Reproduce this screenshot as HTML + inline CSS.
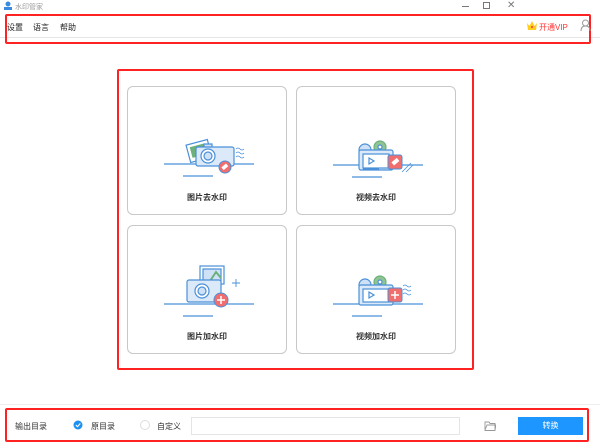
<!DOCTYPE html>
<html><head><meta charset="utf-8"><style>
*{margin:0;padding:0;box-sizing:border-box}
body{width:600px;height:444px;background:#fff;font-family:"Liberation Sans","Noto Sans CJK SC",sans-serif;position:relative;overflow:hidden;color:#333}
.abs{position:absolute}
.red{position:absolute;border:2px solid #f22;border-radius:2px}
.card{position:absolute;width:160px;height:129px;border:1px solid #c8c8c8;border-radius:6px;background:#fff}
.card .t{position:absolute;left:0;right:0;top:105px;text-align:center;font-size:8px;font-weight:bold;color:#333}
.card svg{position:absolute;left:0;top:0}
.m{font-size:8px;color:#222;top:22px}
</style></head><body>
<svg class="abs" style="left:3px;top:1px" width="10" height="10"><circle cx="5" cy="3" r="2.5" fill="#3a8be0"/><rect x="1" y="6" width="8" height="3" fill="#3a8be0"/></svg>
<div class="abs" style="left:15px;top:2px;font-size:7px;color:#999">水印管家</div>
<div class="abs" style="left:462px;top:6px;width:7px;height:1px;background:#777"></div>
<div class="abs" style="left:483px;top:2px;width:7px;height:7px;border:1px solid #777"></div>
<div class="abs" style="left:507px;top:0;font-size:10px;color:#777">✕</div>
<div class="abs" style="left:0;top:37px;width:600px;height:1px;background:#e6e6e6"></div>
<div class="red" style="left:5px;top:14px;width:586px;height:30px"></div>
<div class="abs m" style="left:7px">设置</div>
<div class="abs m" style="left:33px">语言</div>
<div class="abs m" style="left:60px">帮助</div>
<svg class="abs" style="left:526px;top:20px" width="12" height="11"><path d="M1 3 L3.5 6 L6 1 L8.5 6 L11 3 L10 10 L2 10Z" fill="#ffcc22"/><circle cx="6" cy="7" r="1" fill="#f33"/></svg>
<div class="abs m" style="left:539px;color:#f33">开通VIP</div>
<svg class="abs" style="left:580px;top:19px" width="11" height="12"><circle cx="5.5" cy="4" r="3" fill="none" stroke="#999"/><path d="M1 12 Q1 7 5.5 7 Q10 7 10 12" fill="none" stroke="#999"/></svg>

<div class="red" style="left:117px;top:69px;width:357px;height:301px"></div>

<div class="card" style="left:127px;top:86px">
<svg width="160" height="129"><g transform="translate(0,15)"><g fill="none" stroke="#4a90d9" stroke-width="1.2">
<line x1="36" y1="62" x2="126" y2="62"/><line x1="55" y1="74" x2="85" y2="74"/>
<rect x="60" y="40" width="22" height="18" fill="#fff" transform="rotate(-15 71 49)"/>
<rect x="63" y="43" width="15" height="11" fill="#6cb07c" stroke="none" transform="rotate(-15 71 49)"/>
<rect x="76" y="42" width="8" height="4" fill="#cfe1f7"/>
<rect x="68" y="45" width="38" height="19" rx="2" fill="#dbe9f9"/>
<circle cx="80" cy="54" r="7" fill="#fff"/><circle cx="80" cy="54" r="4" fill="#cfe1f7"/>
<path d="M108 47 q2 -2 4 0 q2 2 4 0 M108 51 q2 -2 4 0 q2 2 4 0 M108 55 q2 -2 4 0 q2 2 4 0" stroke-width="0.8"/>
</g><circle cx="97" cy="65" r="6" fill="#f06e6e" stroke="#4a90d9"/><rect x="94" y="63" width="6" height="3.5" fill="#fff" transform="rotate(-40 97 65)"/></g></svg>
<div class="t">图片去水印</div></div>

<div class="card" style="left:296px;top:86px">
<svg width="160" height="129"><g transform="translate(0,15)"><g fill="none" stroke="#4a90d9" stroke-width="1.2">
<line x1="36" y1="63" x2="126" y2="63"/><line x1="55" y1="75" x2="85" y2="75"/>
<circle cx="68" cy="48" r="6" fill="#cfe1f7"/><circle cx="83" cy="45" r="6" fill="#8fc592" stroke="#6cb07c"/><circle cx="83" cy="45" r="2" fill="#fff"/>
<rect x="62" y="48" width="34" height="20" rx="2" fill="#dbe9f9"/><rect x="66" y="52" width="26" height="14" fill="#fff"/>
<path d="M72 56 L77 59 L72 62Z"/><line x1="66" y1="67" x2="82" y2="67"/>
<path d="M105 70 L114 61 M109 70 L116 63" stroke-width="0.8"/>
</g><rect x="91" y="53" width="14" height="14" rx="2" fill="#f06e6e" stroke="#4a90d9"/><rect x="95" y="58" width="7" height="4" fill="#fff" transform="rotate(-40 98 60)"/></g></svg>
<div class="t">视频去水印</div></div>

<div class="card" style="left:127px;top:225px">
<svg width="160" height="129"><g fill="none" stroke="#4a90d9" stroke-width="1.2">
<line x1="36" y1="78" x2="126" y2="78"/><line x1="55" y1="90" x2="85" y2="90"/>
<rect x="72" y="40" width="24" height="18" fill="#fff"/><rect x="75" y="43" width="18" height="12" fill="#cfe1f7"/><path d="M82 55 L88 46 L93 52" stroke="#6cb07c" stroke-width="2"/>
<rect x="59" y="54" width="34" height="22" rx="2" fill="#dbe9f9"/>
<circle cx="74" cy="65" r="7" fill="#fff"/><circle cx="74" cy="65" r="4" fill="#cfe1f7"/>
<path d="M104 57 h8 M108 53 v8" stroke-width="0.9"/>
</g><circle cx="93" cy="74" r="7" fill="#f06e6e" stroke="#4a90d9"/><path d="M89 74 h8 M93 70 v8" stroke="#fff" stroke-width="1.5"/></svg>
<div class="t">图片加水印</div></div>

<div class="card" style="left:296px;top:225px">
<svg width="160" height="129"><g fill="none" stroke="#4a90d9" stroke-width="1.2">
<line x1="36" y1="78" x2="126" y2="78"/><line x1="55" y1="90" x2="85" y2="90"/>
<circle cx="68" cy="59" r="6" fill="#cfe1f7"/><circle cx="83" cy="56" r="6" fill="#8fc592" stroke="#6cb07c"/><circle cx="83" cy="56" r="2" fill="#fff"/>
<rect x="62" y="59" width="34" height="20" rx="2" fill="#dbe9f9"/><rect x="66" y="63" width="26" height="13" fill="#fff"/>
<path d="M72 66 L77 69 L72 72Z"/>
<path d="M106 60 q2 -2 4 0 q2 2 4 0 M106 64 q2 -2 4 0 q2 2 4 0 M106 68 q2 -2 4 0 q2 2 4 0" stroke-width="0.8"/>
</g><rect x="91" y="62" width="14" height="14" rx="2" fill="#f06e6e" stroke="#4a90d9"/><path d="M94 69 h8 M98 65 v8" stroke="#fff" stroke-width="1.5"/></svg>
<div class="t">视频加水印</div></div>

<div class="abs" style="left:0;top:404px;width:600px;height:1px;background:#eee"></div>
<div class="red" style="left:5px;top:408px;width:584px;height:34px"></div>
<div class="abs" style="left:15px;top:421px;font-size:8px">输出目录</div>
<svg class="abs" style="left:73px;top:420px" width="10" height="10"><circle cx="5" cy="5" r="4.5" fill="#1e90f0"/><path d="M2.8 5 L4.5 6.7 L7.3 3.5" stroke="#fff" fill="none" stroke-width="1.1"/></svg>
<div class="abs" style="left:91px;top:421px;font-size:8px">原目录</div>
<div class="abs" style="left:140px;top:420px;width:10px;height:10px;border:1px solid #ddd;border-radius:50%"></div>
<div class="abs" style="left:157px;top:421px;font-size:8px">自定义</div>
<div class="abs" style="left:191px;top:417px;width:269px;height:18px;border:1px solid #e5e5e5"></div>
<svg class="abs" style="left:484px;top:420px" width="12" height="11"><path d="M1 2 h4 l1 1.5 h5 v7 h-10z M1 10 l2 -5 h9 l-1 5" fill="none" stroke="#999" stroke-width="0.9"/></svg>
<div class="abs" style="left:518px;top:417px;width:65px;height:18px;background:#1e96ff;color:#fff;font-size:8px;text-align:center;line-height:18px">转换</div>
</body></html>
